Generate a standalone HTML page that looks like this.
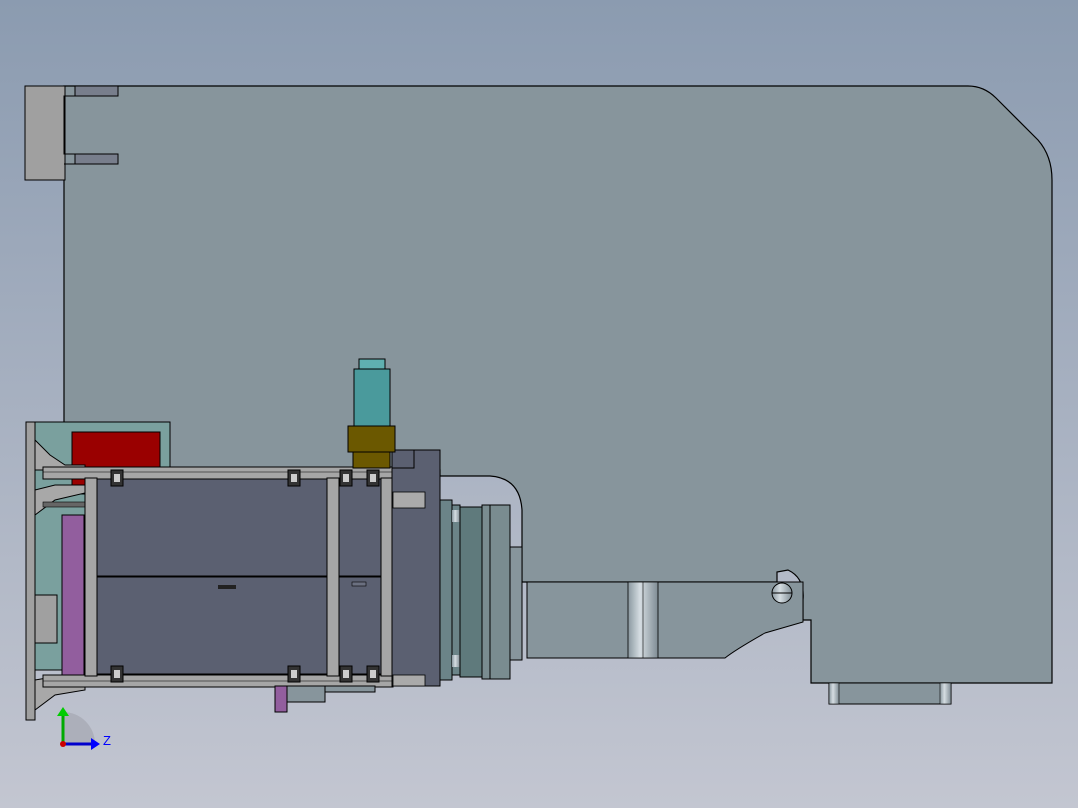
<!DOCTYPE html>
<html><head><style>html,body{margin:0;padding:0;width:1078px;height:808px;overflow:hidden}svg{display:block}</style></head><body>
<svg width="1078" height="808" viewBox="0 0 1078 808" xmlns="http://www.w3.org/2000/svg" font-family="Liberation Sans, sans-serif">
<defs>
<linearGradient id="bg" x1="0" y1="0" x2="0" y2="1"><stop offset="0" stop-color="#8b9bb0"/><stop offset="1" stop-color="#c3c6d1"/></linearGradient>
<linearGradient id="cyl" x1="0" y1="0" x2="1" y2="0"><stop offset="0" stop-color="#8a98a0"/><stop offset="0.4" stop-color="#d5dde2"/><stop offset="1" stop-color="#7f8c94"/></linearGradient>
</defs>
<rect width="1078" height="808" fill="url(#bg)"/>
<!-- main plate -->
<path d="M64,86 L968,86 Q984,86 996,98 L1038,140 Q1052,156 1052,180 L1052,683 L811,683 L811,620 L803,620 L803,600 Q805,578 788,570 L777,572 L777,582 L527,582 L522,582 L522,510 Q520,478 490,476 L440,476 L440,470 L64,470 Z" fill="#87959c" stroke="#000" stroke-width="1.2"/>
<!-- lower extension -->
<path d="M527,582 L803,582 L803,622 L765,633 Q735,650 725,658 L527,658 Z" fill="#87959c" stroke="#000"/>
<rect x="628" y="582" width="30" height="76" fill="url(#cyl)" stroke="#000" stroke-width="0.8"/>
<line x1="643" y1="582" x2="643" y2="658" stroke="#000" stroke-width="0.6"/>
<circle cx="782" cy="593" r="10" fill="url(#cyl)" stroke="#000"/>
<line x1="772" y1="593" x2="792" y2="593" stroke="#000"/>
<!-- bottom feet -->
<rect x="829" y="683" width="122" height="21" fill="#87959c" stroke="#000"/>
<rect x="829" y="683" width="10" height="21" fill="url(#cyl)" stroke="#000" stroke-width="0.6"/>
<rect x="940" y="683" width="11" height="21" fill="url(#cyl)" stroke="#000" stroke-width="0.6"/>
<!-- top left bracket -->
<rect x="25" y="86" width="40" height="94" fill="#a0a0a0" stroke="#000"/>
<rect x="75" y="86" width="43" height="10" fill="#787e8c" stroke="#000"/>
<rect x="75" y="154" width="43" height="10" fill="#787e8c" stroke="#000"/>
<path d="M75,96 L64,96 L64,154 L75,154 M64,164 L75,164 L75,154" fill="none" stroke="#000"/>
<!-- gearbox / flange right of frame -->
<rect x="440" y="500" width="12" height="180" fill="#6b8488" stroke="#000"/>
<rect x="452" y="505" width="8" height="170" fill="#6b8488" stroke="#000"/>
<rect x="452" y="510" width="8" height="12" fill="url(#cyl)"/>
<rect x="452" y="655" width="8" height="12" fill="url(#cyl)"/>
<rect x="460" y="507" width="22" height="170" fill="#5f7a7c" stroke="#000"/>
<rect x="482" y="505" width="28" height="174" fill="#7a8c90" stroke="#000"/>
<line x1="490" y1="505" x2="490" y2="679" stroke="#000"/>
<rect x="510" y="547" width="12" height="113" fill="#87959c" stroke="#000"/>
<!-- left vertical plate -->
<rect x="26" y="422" width="9" height="298" fill="#a0a0a0" stroke="#000"/>
<rect x="35" y="422" width="135" height="248" fill="#7aa09e" stroke="#000"/>
<rect x="72" y="432" width="88" height="36" fill="#9a0000" stroke="#000"/>
<rect x="72" y="468" width="14" height="26" fill="#9a0000" stroke="#000"/>
<rect x="62" y="515" width="22" height="160" fill="#925e9e" stroke="#000"/>
<rect x="35" y="595" width="22" height="48" fill="#a0a0a0" stroke="#000"/>
<path d="M35,440 L50,455 L65,465 L85,465 L85,470 L35,470 Z" fill="#a8a8a8" stroke="#000"/>
<path d="M35,490 L55,485 L85,485 L85,493 L55,500 L35,515 Z" fill="#a8a8a8" stroke="#000"/>
<path d="M35,680 L65,675 L85,680 L85,690 L55,695 L35,710 Z" fill="#a8a8a8" stroke="#000"/>
<rect x="43" y="502" width="45" height="5" fill="#666" stroke="#000" stroke-width="0.6"/>
<!-- frame rails -->
<rect x="43" y="467" width="350" height="12" fill="#a6a6a6" stroke="#000"/>
<line x1="43" y1="472" x2="393" y2="472" stroke="#000" stroke-width="0.6"/>
<rect x="43" y="675" width="350" height="12" fill="#a6a6a6" stroke="#000"/>
<line x1="43" y1="681" x2="393" y2="681" stroke="#000" stroke-width="0.6"/>
<rect x="85" y="478" width="12" height="198" fill="#a6a6a6" stroke="#000"/>
<rect x="327" y="478" width="12" height="198" fill="#a6a6a6" stroke="#000"/>
<rect x="381" y="478" width="12" height="198" fill="#a6a6a6" stroke="#000"/>
<!-- panels -->
<rect x="97" y="479" width="230" height="97" fill="#5b6071" stroke="#000"/>
<rect x="97" y="577" width="230" height="97" fill="#5b6071" stroke="#000"/>
<rect x="339" y="479" width="42" height="97" fill="#5b6071" stroke="#000"/>
<rect x="339" y="577" width="42" height="97" fill="#5b6071" stroke="#000"/>
<rect x="218" y="585" width="18" height="4" fill="#222"/>
<rect x="352" y="582" width="14" height="4" fill="#6b7080" stroke="#000" stroke-width="0.6"/>
<!-- corner blocks -->
<g fill="#333" stroke="#000">
<rect x="111" y="470" width="12" height="16"/><rect x="288" y="470" width="12" height="16"/><rect x="340" y="470" width="12" height="16"/><rect x="367" y="470" width="12" height="16"/>
<rect x="111" y="666" width="12" height="16"/><rect x="288" y="666" width="12" height="16"/><rect x="340" y="666" width="12" height="16"/><rect x="367" y="666" width="12" height="16"/>
</g>
<g fill="#ccc"><rect x="114" y="474" width="6" height="8"/><rect x="291" y="474" width="6" height="8"/><rect x="343" y="474" width="6" height="8"/><rect x="370" y="474" width="6" height="8"/>
<rect x="114" y="670" width="6" height="8"/><rect x="291" y="670" width="6" height="8"/><rect x="343" y="670" width="6" height="8"/><rect x="370" y="670" width="6" height="8"/></g>
<!-- motor block -->
<rect x="392" y="450" width="48" height="236" fill="#5b6071" stroke="#000"/>
<rect x="392" y="450" width="22" height="18" fill="#5b6071" stroke="#000"/>
<rect x="393" y="492" width="32" height="16" fill="#aaa" stroke="#000" stroke-width="0.8"/>
<rect x="393" y="675" width="32" height="11" fill="#aaa" stroke="#000" stroke-width="0.8"/>
<!-- below-frame parts -->
<rect x="275" y="686" width="12" height="26" fill="#925e9e" stroke="#000"/>
<rect x="287" y="686" width="38" height="16" fill="#87959c" stroke="#000"/>
<rect x="325" y="686" width="50" height="6" fill="#87959c" stroke="#000"/>
<!-- valve -->
<rect x="359" y="359" width="26" height="10" fill="#5fb0b0" stroke="#000"/>
<rect x="354" y="369" width="36" height="57" fill="#4a9a9c" stroke="#000"/>
<rect x="348" y="426" width="47" height="26" fill="#6b5800" stroke="#000"/>
<rect x="353" y="452" width="37" height="16" fill="#6b5800" stroke="#000"/>
<!-- axis triad -->
<path d="M63,744 L63,712 A32,32 0 0 1 95,744 Z" fill="#a8aab5" opacity="0.8"/>
<line x1="63" y1="744" x2="63" y2="714" stroke="#0a0" stroke-width="3"/>
<path d="M57,716 L63,707 L69,716 Z" fill="#0c0"/>
<line x1="63" y1="744" x2="92" y2="744" stroke="#00c" stroke-width="3"/>
<path d="M91,738 L100,744 L91,750 Z" fill="#00f"/>
<circle cx="63" cy="744" r="3" fill="#c00"/>
<text x="103" y="745" font-size="13" fill="#00f">Z</text>
</svg>
</body></html>
